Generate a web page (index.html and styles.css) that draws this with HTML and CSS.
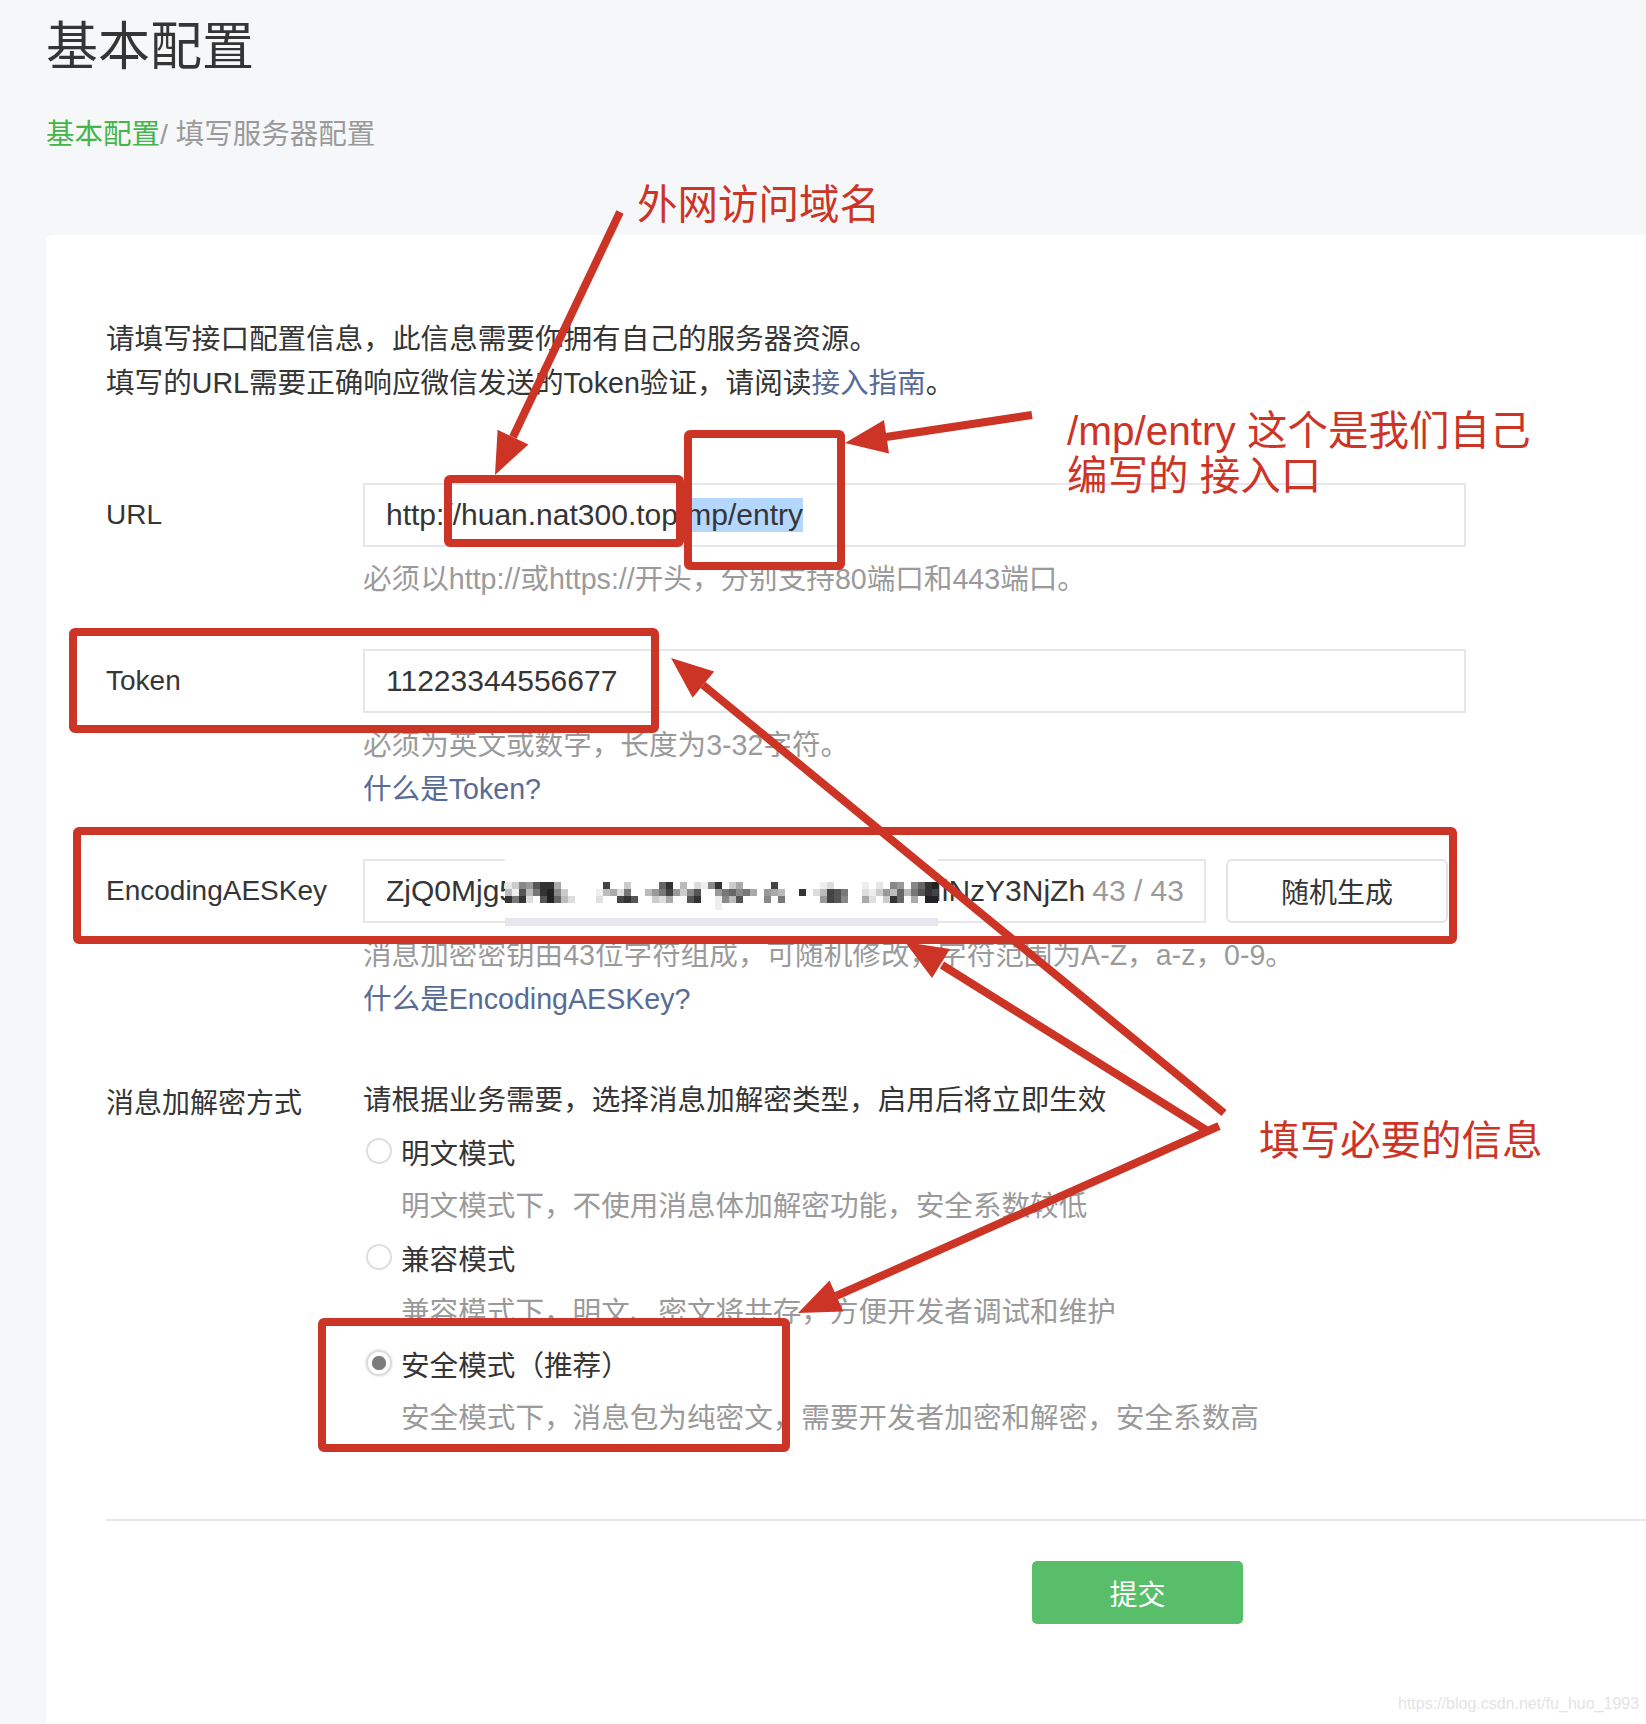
FILE: index.html
```html
<!DOCTYPE html>
<html lang="zh-CN">
<head>
<meta charset="utf-8">
<title>基本配置</title>
<link rel="stylesheet" href="styles.css">
</head>
<body>
<div class="page">
  <h1 class="title">基本配置</h1>
  <div class="crumbs"><span class="crumb-home">基本配置</span>/ 填写服务器配置</div>
  <div class="card">
    <div class="intro">
      <p>请填写接口配置信息，此信息需要你拥有自己的服务器资源。</p>
      <p>填写的URL需要正确响应微信发送的Token验证，请阅读<a class="link">接入指南</a>。</p>
    </div>
    <div class="form">
      <div class="row">
        <div class="label">URL</div>
        <div class="field">
          <div class="input">http://huan.nat300.top/<span class="sel">mp/entry</span></div>
          <div class="help">
            <div>必须以http://或https://开头，分别支持80端口和443端口。</div>
          </div>
        </div>
      </div>
      <div class="row">
        <div class="label">Token</div>
        <div class="field">
          <div class="input">11223344556677</div>
          <div class="help">
            <div>必须为英文或数字，长度为3-32字符。</div>
            <div><a class="link">什么是Token?</a></div>
          </div>
        </div>
      </div>
      <div class="row">
        <div class="label">EncodingAESKey</div>
        <div class="field">
          <div class="field-line">
            <div class="input input-aes">
              <span>ZjQ0Mjg5</span><span class="gap"></span><span>NiNzY3NjZh</span>
              <span class="counter">43 / 43</span>
              <div class="mosaic">
                <svg width="433" height="67" viewBox="0 0 433 67" shape-rendering="crispEdges">
                  <rect x="0" y="23" width="7" height="7" fill="#e6e6e6"/><rect x="0" y="30" width="7" height="7" fill="#bbb"/><rect x="0" y="37" width="7" height="7" fill="#333"/>
                  <rect x="7" y="23" width="7" height="7" fill="#ccc"/><rect x="7" y="30" width="7" height="7" fill="#eee"/><rect x="7" y="37" width="7" height="7" fill="#777"/>
                  <rect x="14" y="23" width="7" height="7" fill="#888"/><rect x="14" y="30" width="7" height="7" fill="#555"/><rect x="14" y="37" width="7" height="7" fill="#333"/>
                  <rect x="21" y="23" width="7" height="7" fill="#999"/><rect x="21" y="30" width="7" height="7" fill="#bbb"/><rect x="21" y="37" width="7" height="7" fill="#ddd"/>
                  <rect x="28" y="23" width="7" height="7" fill="#555"/><rect x="28" y="30" width="7" height="7" fill="#777"/>
                  <rect x="35" y="23" width="7" height="7" fill="#333"/><rect x="35" y="30" width="7" height="7" fill="#333"/><rect x="35" y="37" width="7" height="7" fill="#555"/>
                  <rect x="42" y="23" width="7" height="7" fill="#333"/><rect x="42" y="30" width="7" height="7" fill="#222"/><rect x="42" y="37" width="7" height="7" fill="#222"/>
                  <rect x="49" y="23" width="7" height="7" fill="#aaa"/><rect x="49" y="30" width="7" height="7" fill="#888"/><rect x="49" y="37" width="7" height="7" fill="#666"/>
                  <rect x="56" y="30" width="7" height="7" fill="#ccc"/><rect x="56" y="37" width="7" height="7" fill="#bbb"/>
                  <rect x="63" y="37" width="7" height="7" fill="#ddd"/>
                  <rect x="91" y="30" width="7" height="7" fill="#eee"/><rect x="91" y="37" width="7" height="7" fill="#e0e0e0"/>
                  <rect x="98" y="23" width="7" height="7" fill="#444"/><rect x="98" y="30" width="7" height="7" fill="#bbb"/>
                  <rect x="105" y="30" width="7" height="7" fill="#aaa"/>
                  <rect x="112" y="30" width="7" height="7" fill="#ddd"/><rect x="112" y="37" width="7" height="7" fill="#444"/>
                  <rect x="119" y="23" width="7" height="7" fill="#ccc"/><rect x="119" y="30" width="7" height="7" fill="#777"/><rect x="119" y="37" width="7" height="7" fill="#333"/>
                  <rect x="126" y="37" width="7" height="7" fill="#555"/>
                  <rect x="140" y="30" width="7" height="7" fill="#bbb"/>
                  <rect x="147" y="30" width="7" height="7" fill="#999"/><rect x="147" y="37" width="7" height="7" fill="#ccc"/>
                  <rect x="154" y="23" width="7" height="7" fill="#666"/><rect x="154" y="30" width="7" height="7" fill="#777"/><rect x="154" y="37" width="7" height="7" fill="#ddd"/>
                  <rect x="161" y="23" width="7" height="7" fill="#333"/><rect x="161" y="30" width="7" height="7" fill="#444"/><rect x="161" y="37" width="7" height="7" fill="#aaa"/>
                  <rect x="168" y="30" width="7" height="7" fill="#999"/>
                  <rect x="175" y="23" width="7" height="7" fill="#bbb"/><rect x="175" y="30" width="7" height="7" fill="#ccc"/>
                  <rect x="182" y="30" width="7" height="7" fill="#888"/><rect x="182" y="37" width="7" height="7" fill="#555"/>
                  <rect x="189" y="23" width="7" height="7" fill="#ddd"/><rect x="189" y="30" width="7" height="7" fill="#555"/><rect x="189" y="37" width="7" height="7" fill="#333"/>
                  <rect x="196" y="23" width="7" height="7" fill="#eee"/>
                  <rect x="203" y="23" width="7" height="7" fill="#888"/>
                  <rect x="210" y="23" width="7" height="7" fill="#333"/><rect x="210" y="30" width="7" height="7" fill="#999"/><rect x="210" y="37" width="7" height="7" fill="#eee"/><rect x="210" y="44" width="7" height="7" fill="#eee"/>
                  <rect x="217" y="30" width="7" height="7" fill="#777"/><rect x="217" y="37" width="7" height="7" fill="#888"/>
                  <rect x="224" y="23" width="7" height="7" fill="#ccc"/><rect x="224" y="30" width="7" height="7" fill="#666"/><rect x="224" y="37" width="7" height="7" fill="#bbb"/>
                  <rect x="231" y="23" width="7" height="7" fill="#aaa"/><rect x="231" y="30" width="7" height="7" fill="#888"/><rect x="231" y="37" width="7" height="7" fill="#555"/>
                  <rect x="238" y="30" width="7" height="7" fill="#777"/>
                  <rect x="245" y="30" width="7" height="7" fill="#aaa"/>
                  <rect x="259" y="30" width="7" height="7" fill="#999"/><rect x="259" y="37" width="7" height="7" fill="#888"/>
                  <rect x="266" y="23" width="7" height="7" fill="#444"/><rect x="266" y="30" width="7" height="7" fill="#aaa"/>
                  <rect x="273" y="30" width="7" height="7" fill="#bbb"/><rect x="273" y="37" width="7" height="7" fill="#777"/>
                  <rect x="294" y="30" width="7" height="7" fill="#333"/>
                  <rect x="308" y="30" width="7" height="7" fill="#ddd"/>
                  <rect x="315" y="23" width="7" height="7" fill="#eee"/><rect x="315" y="30" width="7" height="7" fill="#bbb"/><rect x="315" y="37" width="7" height="7" fill="#999"/>
                  <rect x="322" y="23" width="7" height="7" fill="#ddd"/><rect x="322" y="30" width="7" height="7" fill="#444"/><rect x="322" y="37" width="7" height="7" fill="#444"/>
                  <rect x="329" y="30" width="7" height="7" fill="#555"/><rect x="329" y="37" width="7" height="7" fill="#555"/>
                  <rect x="336" y="30" width="7" height="7" fill="#777"/><rect x="336" y="37" width="7" height="7" fill="#888"/>
                  <rect x="357" y="23" width="7" height="7" fill="#eee"/><rect x="357" y="30" width="7" height="7" fill="#ddd"/><rect x="357" y="37" width="7" height="7" fill="#aaa"/>
                  <rect x="364" y="30" width="7" height="7" fill="#eee"/><rect x="364" y="37" width="7" height="7" fill="#e0e0e0"/>
                  <rect x="371" y="23" width="7" height="7" fill="#e6e6e6"/><rect x="371" y="30" width="7" height="7" fill="#ccc"/>
                  <rect x="378" y="30" width="7" height="7" fill="#999"/><rect x="378" y="37" width="7" height="7" fill="#ccc"/>
                  <rect x="385" y="23" width="7" height="7" fill="#888"/><rect x="385" y="30" width="7" height="7" fill="#bbb"/><rect x="385" y="37" width="7" height="7" fill="#333"/>
                  <rect x="392" y="23" width="7" height="7" fill="#999"/><rect x="392" y="30" width="7" height="7" fill="#666"/><rect x="392" y="37" width="7" height="7" fill="#666"/>
                  <rect x="399" y="30" width="7" height="7" fill="#bbb"/>
                  <rect x="406" y="23" width="7" height="7" fill="#888"/><rect x="406" y="30" width="7" height="7" fill="#777"/><rect x="406" y="37" width="7" height="7" fill="#aaa"/>
                  <rect x="413" y="23" width="7" height="7" fill="#666"/><rect x="413" y="30" width="7" height="7" fill="#555"/>
                  <rect x="420" y="23" width="7" height="7" fill="#333"/><rect x="420" y="30" width="7" height="7" fill="#333"/><rect x="420" y="37" width="7" height="7" fill="#222"/>
                  <rect x="427" y="23" width="6" height="7" fill="#222"/><rect x="427" y="30" width="6" height="7" fill="#444"/><rect x="427" y="37" width="6" height="7" fill="#222"/>
                  <rect x="0" y="59" width="433" height="8" fill="#e6e6ec"/>
                </svg>
              </div>
            </div>
            <button class="btn-random" type="button">随机生成</button>
          </div>
          <div class="help">
            <div>消息加密密钥由43位字符组成，可随机修改，字符范围为A-Z，a-z，0-9。</div>
            <div><a class="link">什么是EncodingAESKey?</a></div>
          </div>
        </div>
      </div>
      <div class="row row-mode">
        <div class="label label-mode">消息加解密方式</div>
        <div class="field">
          <div class="mode-line">请根据业务需要，选择消息加解密类型，启用后将立即生效</div>
          <div class="option"><span class="radio"></span>明文模式</div>
          <div class="option-desc">明文模式下，不使用消息体加解密功能，安全系数较低</div>
          <div class="option"><span class="radio"></span>兼容模式</div>
          <div class="option-desc">兼容模式下，明文、密文将共存，方便开发者调试和维护</div>
          <div class="option"><span class="radio radio-on"></span>安全模式（推荐）</div>
          <div class="option-desc">安全模式下，消息包为纯密文，需要开发者加密和解密，安全系数高</div>
        </div>
      </div>
    </div>
    <div class="divider"></div>
    <div class="actions"><button class="btn-submit" type="button">提交</button></div>
  </div>
</div>

<svg class="annot" width="1646" height="1724" viewBox="0 0 1646 1724">
  <g fill="none" stroke="#cc3426" stroke-width="8" stroke-linejoin="round">
    <rect x="448" y="479" width="232" height="64" rx="2"/>
    <rect x="688" y="434" width="153" height="132" rx="2"/>
    <rect x="73" y="632" width="582" height="97" rx="2"/>
    <rect x="77" y="831" width="1376" height="109" rx="2"/>
    <rect x="322" y="1322" width="464" height="126" rx="2"/>
  </g>
  <g fill="none" stroke="#cc3426" stroke-width="8">
    <line x1="620" y1="212" x2="513" y2="437"/>
    <line x1="1032" y1="415" x2="886" y2="437"/>
    <line x1="1224" y1="1113" x2="703" y2="685"/>
    <line x1="1206" y1="1130" x2="942" y2="965"/>
    <line x1="1219" y1="1126" x2="836" y2="1296"/>
  </g>
  <g fill="#cc3426">
    <polygon points="495,475 528.4,444.4 497.6,429.8"/>
    <polygon points="845,443 889,453.6 884,420"/>
    <polygon points="671,658 714.2,671.6 692.6,697.8"/>
    <polygon points="905,942 950,949 932,978"/>
    <polygon points="798,1313 843.3,1311.4 829.5,1280.4"/>
  </g>
</svg>
<div class="note note-domain">外网访问域名</div>
<div class="note note-entry">/mp/entry 这个是我们自己<br>编写的 接入口</div>
<div class="note note-fill">填写必要的信息</div>
<div class="watermark">https://blog.csdn.net/fu_huo_1993</div>
</body>
</html>
```

FILE: styles.css
```css
* { box-sizing: border-box; }
html, body { margin: 0; padding: 0; }
body {
  width: 1646px;
  height: 1724px;
  overflow: hidden;
  position: relative;
  background: #f6f7f9;
  font-family: "Liberation Sans", "Noto Sans CJK SC", sans-serif;
  color: #353535;
}
.page {
  height: 100%;
  padding: 17px 0 0 46px;
  display: flex;
  flex-direction: column;
}
.title {
  margin: 0;
  font-size: 52px;
  line-height: 60px;
  font-weight: normal;
  color: #353535;
}
.crumbs {
  margin-top: 35px;
  font-size: 28.5px;
  line-height: 44px;
  color: #9a9a9a;
}
.crumb-home { color: #44b549; }
.card {
  margin-top: 79px;
  flex: 1;
  background: #fff;
  border-radius: 6px 0 0 0;
  padding: 82px 0 0 60px;
}
.intro { font-size: 28.6px; line-height: 44px; }
.intro p { margin: 0; }
.link { color: #576b95; text-decoration: none; }
.form { margin-top: 78px; }
.row { display: flex; align-items: flex-start; }
.row + .row { margin-top: 48px; }
.row.row-mode { margin-top: 53px; }
.label {
  flex: none;
  width: 257px;
  height: 64px;
  display: flex;
  align-items: center;
  font-size: 28px;
}
.label-mode { height: 53px; }
.field { flex: none; width: 1103px; }
.input {
  height: 64px;
  border: 2px solid #e7e7eb;
  padding: 0 20px 0 21px;
  display: flex;
  align-items: center;
  font-size: 30px;
  color: #353535;
  white-space: nowrap;
  background: #fff;
}
.sel { background: #b4d7ff; }
.help {
  margin-top: 10px;
  font-size: 28.6px;
  line-height: 44px;
  color: #9a9a9a;
}
.field-line { display: flex; align-items: flex-start; }
.input-aes { position: relative; flex: none; width: 843px; }
.gap { display: inline-block; width: 404px; flex: none; }
.counter { margin-left: auto; color: #9a9a9a; }
.mosaic {
  position: absolute;
  left: 140px;
  top: -2px;
  width: 433px;
  height: 67px;
  background: #fff;
}
.mosaic svg { display: block; }
.btn-random {
  flex: none;
  margin-left: 20px;
  width: 222px;
  height: 64px;
  border: 2px solid #e4e4e8;
  border-radius: 6px;
  background: #fff;
  font-family: inherit;
  font-size: 28px;
  color: #353535;
  padding: 0;
}
.mode-line { font-size: 28.6px; line-height: 53px; }
.option {
  display: flex;
  align-items: center;
  height: 52px;
  padding-bottom: 4px;
  font-size: 28.6px;
}
.radio {
  flex: none;
  position: relative;
  width: 26px;
  height: 26px;
  margin: 0 9px 0 3px;
  border-radius: 50%;
  border: 2px solid #dedede;
  background: #fff;
}
.radio-on {
  border-color: #dcdcdc;
  box-shadow: 0 0 2px 1px #ececec;
}
.radio-on::after {
  content: "";
  position: absolute;
  left: 4px;
  top: 4px;
  width: 14px;
  height: 14px;
  border-radius: 50%;
  background: #7c7c7c;
  box-shadow: 0 0 1px #999;
}
.option-desc {
  padding-left: 38px;
  font-size: 28.6px;
  line-height: 54px;
  color: #9a9a9a;
}
.divider {
  margin-top: 74px;
  height: 2px;
  background: #e6e6eb;
}
.actions { margin-top: 40px; padding-left: 926px; }
.btn-submit {
  width: 211px;
  height: 63px;
  border: none;
  border-radius: 5px;
  background: #58be6a;
  color: #fff;
  font-family: inherit;
  font-size: 28px;
  padding: 0;
}
.annot {
  position: absolute;
  left: 0;
  top: 0;
  pointer-events: none;
}
.note {
  position: absolute;
  color: #cc3426;
  font-size: 40.5px;
  line-height: 45px;
  white-space: nowrap;
}
.note-domain { left: 637px; top: 183px; }
.note-entry { left: 1067px; top: 409px; }
.note-fill { left: 1259px; top: 1119px; }
.watermark {
  position: absolute;
  left: 1398px;
  top: 1694px;
  font-family: "Liberation Sans", sans-serif;
  font-size: 16px;
  line-height: 20px;
  color: #e4e4e4;
  white-space: nowrap;
}
```
